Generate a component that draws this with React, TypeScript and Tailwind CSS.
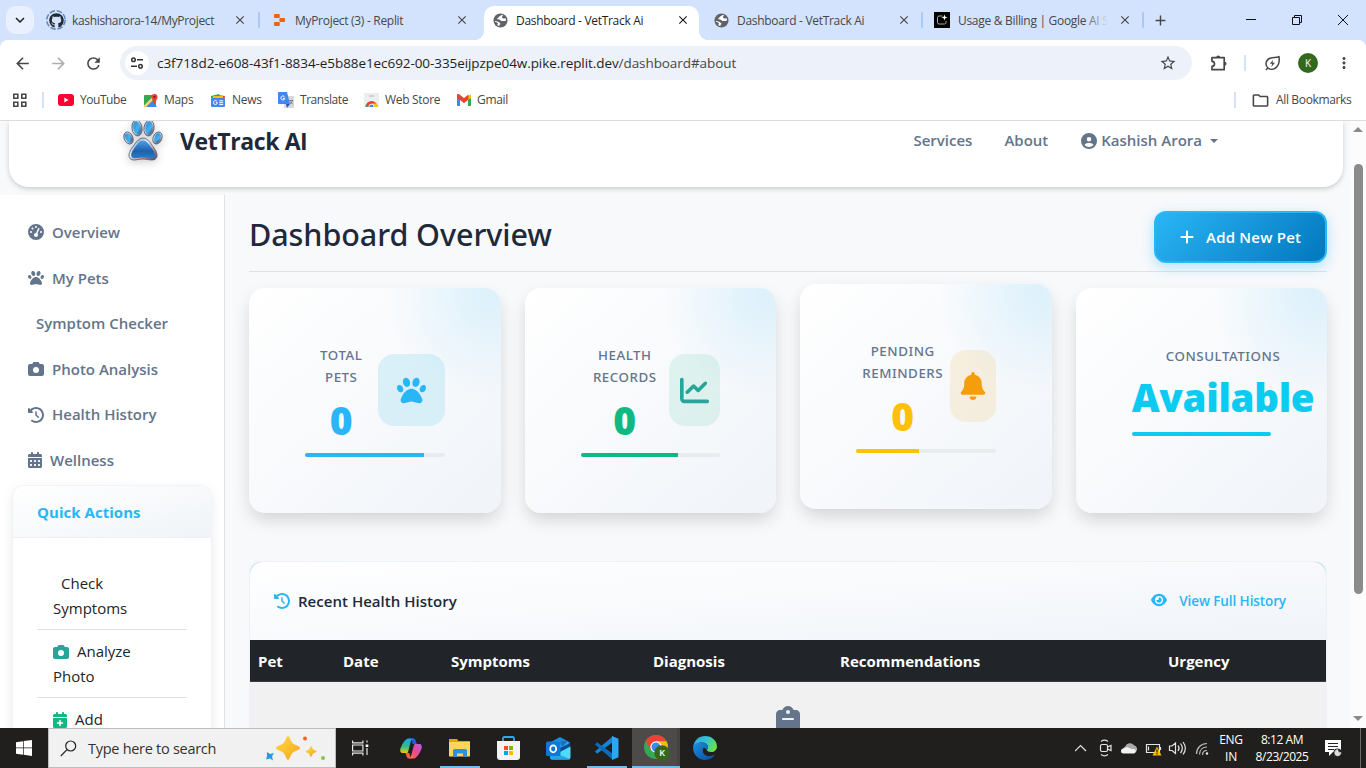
import React from "react";
import {
  FaGithub, FaPaw, FaGaugeHigh, FaCamera, FaClockRotateLeft, FaCalendarDays, FaCalendarPlus,
  FaCircleUser, FaChartLine, FaBell, FaEye, FaPlus, FaClipboard,
} from "react-icons/fa6";
import {
  MdArrowBack, MdArrowForward, MdRefresh, MdStarBorder, MdMoreVert,
  MdClose, MdAdd, MdOutlineFolder, MdKeyboardArrowDown,
} from "react-icons/md";

function Sep({ className = "" }: { className?: string }) {
  return <div className={`h-4 w-0.5 shrink-0 rounded bg-[#a8c7fa] ${className}`} />;
}

function Tab({ icon, title, active, sep, fade, first }: {
  icon: React.ReactNode; title: string; active?: boolean; sep?: boolean; fade?: boolean; first?: boolean;
}) {
  return (
    <div className="relative flex h-10 w-[221px] shrink-0 items-center">
      {active && (
        <>
          <div className="absolute top-[6px] bottom-0 left-[2px] w-[215px] rounded-t-[10px] bg-white" />
          <div className="absolute bottom-0 -left-[8px] size-[10px] bg-[radial-gradient(circle_at_0_0,transparent_10px,#fff_10.5px)]" />
          <div className="absolute bottom-0 left-[217px] size-[10px] bg-[radial-gradient(circle_at_100%_0,transparent_10px,#fff_10.5px)]" />
        </>
      )}
      <div className="relative ml-[7px] flex w-[24px] justify-center">{icon}</div>
      <div className={`relative overflow-hidden pt-[2px] ${first ? "ml-[1px] w-[151px]" : "ml-[3px] w-[150px]"}`}>
        <span className={`block whitespace-nowrap text-[12px] leading-4 ${first ? "tracking-[-0.33px]" : "tracking-[-0.3px]"} ${active ? "text-[#1f1f1f]" : "text-[#474747]"}`}>{title}</span>
        {fade && <div className="absolute inset-y-0 right-0 w-6 bg-linear-to-r from-transparent to-[#d3e3fd]" />}
      </div>
      <MdClose className={`relative ml-[10px] size-[14px] shrink-0 ${active ? "text-[#1f1f1f]" : "text-[#474747]"}`} />
      {sep && <Sep className="ml-auto mr-px" />}
    </div>
  );
}

function ReplitIcon() {
  return (
    <svg className="relative -left-px" width="11" height="12" viewBox="0 0 11 12" fill="#f26207">
      <rect x="0" y="0" width="5.800" height="4" rx="1" />
      <rect x="5.400" y="4" width="5.600" height="4" rx="1" />
      <rect x="0" y="8" width="5.800" height="4" rx="1" />
    </svg>
  );
}

function AiStudioIcon() {
  return (
    <svg className="relative -left-px" width="16" height="16" viewBox="0 0 16 16">
      <rect width="16" height="16" fill="#000" />
      <path d="M8.500 4H5a1.500 1.500 0 0 0-1.500 1.500v5A1.500 1.500 0 0 0 5 12h5.500a1.500 1.500 0 0 0 1.500-1.500V9" fill="none" stroke="#aaa" />
      <path d="M10.500 2.500l.8 2.200 2.200.8-2.200.8-.8 2.200-.8-2.200-2.200-.8 2.200-.8z" fill="#fff" />
    </svg>
  );
}

function GlobeIcon() {
  return (
    <svg className="relative -left-px" width="15" height="15" viewBox="0 0 16 16">
      <circle cx="8" cy="8" r="7.500" fill="#5f6368" />
      <path d="M8.600 2c-.2 1.300-2 .9-2.100 2-.1 1-1.900.8-1.900 1.900 0 1.200 1.300 1.100 2.500 1.200 1.200.2 1 1.400 2.300 1.500 1.500.1 3 .2 4.500-.7.100-1-.2-2-.6-2.700-.7.700-1.800.8-2.600.3-.8-.6-1.300-.4-1.200-1.300.1-.8 1.300-.5 1.400-1.700C10.200 2.200 9.500 2 8.600 2z" fill="#fff" />
      <path d="M2 8.400c1.200 0 2.700.3 3.900 1.100 1 .8 2 .8 1.900 1.900-.1.900-1.200 1-1.100 2.500-.8-.2-1.600-.6-2.200-1.200.2-.7 1-1 .6-1.700-.4-.8-1.900-1.200-2.900-1.300-.1-.4-.2-.9-.2-1.300z" fill="#fff" />
    </svg>
  );
}

function BrowserTop() {
  return (
    <header className="shrink-0">
      <div className="flex h-10 items-center bg-[#d3e3fd]">
        <div className="ml-[6px] mr-[6px] flex size-7 items-center justify-center rounded-[10px] bg-[#e9f0fe]">
          <MdKeyboardArrowDown className="size-[18px] text-[#1f1f1f]" />
        </div>
        <Tab first sep title="kashisharora-14/MyProject" icon={
          <div className="relative -left-[3px] flex size-5 shrink-0 items-center justify-center">
            <svg className="absolute inset-0" width="20" height="20" viewBox="0 0 20 20" fill="none" stroke="#5f83b8" strokeWidth="1.500" strokeDasharray="5.500 1.800"><circle cx="10" cy="10" r="9.200" /></svg>
            <FaGithub className="size-[15px] text-[#24292f]" />
          </div>
        } />
        <Tab title="MyProject (3) - Replit" icon={<ReplitIcon />} />
        <Tab active title="Dashboard - VetTrack Ai" icon={<GlobeIcon />} />
        <Tab sep title="Dashboard - VetTrack Ai" icon={<GlobeIcon />} />
        <Tab sep fade title="Usage & Billing | Google AI S" icon={<AiStudioIcon />} />
        <MdAdd className="ml-[7px] size-[17px] text-[#474747]" />
        <svg className="ml-auto mr-[17px]" width="104" height="12" viewBox="0 0 104 12" fill="none" stroke="#111">
          <path d="M1 5.500h10M47.500 3.500h7v7h-7zM49.500 3.500v-2h7v7h-2M93 1l10 10M103 1l-10 10" />
        </svg>
      </div>
      <div className="bg-[#d3e3fd]">
        <div className="rounded-t-[8px] bg-white">
          <div className="flex h-[46px] items-center">
            <MdArrowBack className="ml-[13px] size-[19px] text-[#474747]" />
            <MdArrowForward className="ml-[17px] size-[19px] text-[#adadad]" />
            <MdRefresh className="ml-4 size-[19px] text-[#474747]" />
            <div className="ml-[17px] flex h-[34px] w-[1072px] items-center rounded-full bg-[#ecf1fa] px-[5px]">
              <div className="flex size-6 items-center justify-center rounded-full bg-white">
                <svg width="14" height="12" viewBox="0 0 14 12" fill="none" stroke="#333" strokeWidth="1.500">
                  <circle cx="3.500" cy="2.700" r="1.800" /><path d="M7 2.700h6M1 9.200h6" /><circle cx="10.500" cy="9.200" r="1.800" />
                </svg>
              </div>
              <span className="ml-2 whitespace-nowrap text-[13.5px] tracking-[-0.073px] text-[#1f1f1f]">
                c3f718d2-e608-43f1-8834-e5b88e1ec692-00-335eijpzpe04w.pike.replit.dev<span className="text-[#474747]">/dashboard#about</span>
              </span>
              <MdStarBorder className="ml-auto mr-[10px] size-[18px] text-[#474747]" />
            </div>
            <svg className="ml-[17px]" width="19" height="19" viewBox="0 0 19 19" fill="none" stroke="#474747" strokeWidth="1.700">
              <path d="M3 3.700h12.200v12H3v-3.400a2.500 2.500 0 0 0 0-5z" strokeLinejoin="round" />
              <path d="M7.200 3.500a2 2 0 0 1 4 0zM15.500 7.700a2 2 0 0 1 0 4z" fill="#474747" stroke="none" />
            </svg>
            <div className="ml-4 h-4 w-0.5 bg-[#d3e3fd]" />
            <svg className="ml-[18px]" width="17" height="17" viewBox="0 0 17 17" fill="none" stroke="#474747" strokeWidth="1.500">
              <path d="M2 15l2-2.300M4 13C.6 10 1.800 5 6 3.300 9 2.100 12 3 15 1.800c.6 4.200 0 8.200-2.700 10.600C9.800 14.700 6.300 15 4 13z" />
              <path d="M9 5L5.800 8.800h2.400L7.300 12l3.700-4.200H8.600z" fill="#474747" stroke="none" />
            </svg>
            <div className="ml-[17px] flex size-5 items-center justify-center rounded-full bg-[#33691e] text-[10px] text-white">K</div>
            <MdMoreVert className="ml-[17px] size-[18px] text-[#474747]" />
          </div>
          <div className="flex h-[35px] items-center border-b border-[#dcdcdc] pb-[6px] pl-3 text-[12px] tracking-[-0.3px] text-[#474747] [&>span]:whitespace-nowrap">
            <svg width="15" height="15" viewBox="0 0 15 15" fill="none" stroke="#474747" strokeWidth="1.600">
              <path d="M1.800 1.300h4v4h-4zM9.800 1.300h4v4h-4zM1.800 9.300h4v4h-4zM9.800 9.300h4v4h-4z" />
            </svg>
            <div className="ml-[15px] h-4 w-0.5 bg-[#d3e3fd]" />
            <svg className="ml-[14px]" width="16" height="12" viewBox="0 0 16 12"><rect width="16" height="12" rx="3" fill="#f03" /><path d="M6.300 3.500v5l4.200-2.500z" fill="#fff" /></svg>
            <span className="ml-[6px] w-[47px] tracking-[-0.45px]">YouTube</span>
            <svg className="ml-4" width="16" height="15" viewBox="0 0 16 15">
              <rect x="1" y="2" width="12" height="12" rx="1" fill="#34a853" /><path d="M1 14L8 7l6 7z" fill="#4285f4" /><path d="M1 12.500L11 2.500l2 1.500L3 14H1z" fill="#fdd663" />
              <path d="M11.500 11C11 8 8.500 7 8.500 4a3 3 0 0 1 6 0c0 3-2.500 4-3 7z" fill="#ea4335" /><circle cx="11.500" cy="3.800" r="1.100" fill="#811" />
            </svg>
            <span className="ml-[5px] w-[30px]">Maps</span>
            <svg className="ml-[16px]" width="16" height="15" viewBox="0 0 16 15">
              <path d="M1 3l8-2 1 4H1z" fill="#34a853" /><path d="M8 2l7 1-1 6-6-1z" fill="#ea4335" /><path d="M3 3h10v3H3z" fill="#fbbc04" /><rect x="1" y="5" width="14" height="9" rx="1" fill="#4285f4" />
              <path d="M7 8.300a2 2 0 1 0 .4 1.400H5.700M9.200 7.800h4M9.200 9.700h4M9.200 11.600h4" stroke="#fff" fill="none" />
            </svg>
            <span className="ml-[6px] w-[30px]">News</span>
            <svg className="ml-[16px]" width="16" height="16" viewBox="0 0 16 16">
              <rect x="6" y="4" width="10" height="12" rx="1" fill="#d5d9dd" /><path d="M1 0h8l3 12H1a1 1 0 0 1-1-1V1a1 1 0 0 1 1-1z" fill="#4285f4" /><path d="M8 12h4l-3 4z" fill="#2a56c6" />
              <path d="M6.500 4.700a2 2 0 1 0 .4 1.600H5" stroke="#fff" fill="none" /><path d="M11.200 8.500H15M14.300 8.500c-.5 2-1.500 2.800-2.500 3.500M12 9.500l2.600 2.700" stroke="#5f6368" strokeWidth=".8" fill="none" />
            </svg>
            <span className="ml-[6px] w-[48px] tracking-[-0.45px]">Translate</span>
            <svg className="ml-4" width="15" height="14" viewBox="0 0 15 14">
              <path d="M0 0h15v13a1 1 0 0 1-1 1H1a1 1 0 0 1-1-1z" fill="#eceff1" /><path d="M1.500 14a6 6 0 0 1 12 0z" fill="#ea4335" /><path d="M1.500 14a6 6 0 0 1 .8-3l3 3z" fill="#34a853" /><path d="M8 10.500h5a6 6 0 0 1 .5 3.500H8z" fill="#fbbc04" /><circle cx="7.500" cy="13.500" r="2.800" fill="#fff" /><circle cx="7.500" cy="13.500" r="2.100" fill="#4285f4" /><path d="M5 3h5" stroke="#b0b5b9" />
            </svg>
            <span className="ml-[6px] w-[56px]">Web Store</span>
            <svg className="ml-[15px]" width="16" height="12" viewBox="0 0 16 12">
              <path d="M1 2v9a1 1 0 0 0 1 1h2V4z" fill="#4285f4" /><path d="M15 2v9a1 1 0 0 1-1 1h-2V4z" fill="#34a853" /><path d="M12 2l3-1.500V4l-3 2.300z" fill="#fbbc04" /><path d="M1 4V1.500C1 .2 2.500-.3 3.500.5L8 4l4.500-3.400V5.700L8 9z" fill="#ea4335" />
            </svg>
            <span className="ml-[5px]">Gmail</span>
            <div className="ml-auto h-4 w-0.5 bg-[#d3e3fd]" />
            <MdOutlineFolder className="ml-[15px] size-[19px]" />
            <span className="ml-[6px] mr-[14px] w-[76px] tracking-[-0.35px]">All Bookmarks</span>
          </div>
        </div>
      </div>
    </header>
  );
}

function PawLogo() {
  return (
    <svg className="drop-shadow-[0_2px_4px_rgba(0,0,0,0.2)]" width="44" height="44" viewBox="0 0 44 44" stroke="#4c5876" strokeWidth=".8">
      <defs>
        <linearGradient id="rim" x1="0" y1="0" x2="1" y2="1"><stop offset="0" stopColor="#5d7ba6" /><stop offset=".4" stopColor="#e6edf5" /><stop offset=".7" stopColor="#b98f88" /><stop offset="1" stopColor="#3a4a70" /></linearGradient>
        <linearGradient id="pad" x1="0" y1="0" x2="0" y2="1"><stop offset="0" stopColor="#4aa3e6" /><stop offset=".6" stopColor="#1f5fae" /><stop offset="1" stopColor="#2a7cc9" /></linearGradient>
        <linearGradient id="toe" x1="0" y1="0" x2="1" y2="1"><stop offset="0" stopColor="#2f86d6" /><stop offset=".6" stopColor="#42b4ee" /><stop offset="1" stopColor="#284a86" /></linearGradient>
      </defs>
      <g fill="url(#rim)">
        <ellipse cx="16" cy="10" rx="5" ry="8" transform="rotate(-8 16 10)" />
        <ellipse cx="28" cy="10" rx="5" ry="8" transform="rotate(8 28 10)" />
        <ellipse cx="7.500" cy="20" rx="4.300" ry="6.300" transform="rotate(-24 7.500 20)" />
        <ellipse cx="36.500" cy="20" rx="4.300" ry="6.300" transform="rotate(24 36.500 20)" />
        <path d="M22 20c5 0 8 6 11 10 3 4 4 8 2 10.500-3 3-8 .5-13 .5s-10 2.500-13-.5C7 38 8 34 11 30c3-4 6-10 11-10z" />
      </g>
      <g fill="url(#toe)" stroke="none">
        <ellipse cx="16" cy="10" rx="3.700" ry="6.700" transform="rotate(-8 16 10)" />
        <ellipse cx="28" cy="10" rx="3.700" ry="6.700" transform="rotate(8 28 10)" />
        <ellipse cx="7.500" cy="20" rx="2.900" ry="4.900" transform="rotate(-24 7.500 20)" />
        <ellipse cx="36.500" cy="20" rx="2.900" ry="4.900" transform="rotate(24 36.500 20)" />
      </g>
      <path d="M22 22.500c4 0 6.700 5 9.500 8.700 2.300 3 3 6.300 1.700 8-2 2-7 .3-11.200.3s-9.200 1.700-11.200-.3c-1.300-1.700-.6-5 1.700-8 2.800-3.700 5.500-8.700 9.500-8.700z" fill="url(#pad)" stroke="none" />
    </svg>
  );
}

const navItems = [
  { label: "Overview", icon: <FaGaugeHigh className="size-4" /> },
  { label: "My Pets", icon: <FaPaw className="size-4" /> },
  { label: "Symptom Checker", icon: null },
  { label: "Photo Analysis", icon: <FaCamera className="size-4" /> },
  { label: "Health History", icon: <FaClockRotateLeft className="size-4" /> },
  { label: "Wellness", icon: <FaCalendarDays className="h-4 w-[14px]" /> },
];

function Sidebar() {
  return (
    <aside className="flex w-[225px] shrink-0 flex-col border-r border-[#dee2e6] bg-white pt-[14.5px]">
      {navItems.map((n) => (
        <div key={n.label} className="flex h-[45.600px] shrink-0 items-center whitespace-nowrap pl-7 text-[15px] font-semibold text-[#64748b]">
          {n.icon}<span className="ml-2">{n.label}</span>
        </div>
      ))}
      <div className="ml-3 mt-[1.5px] w-[200px] shrink-0 rounded-[12px] border border-[#f1f4f7] bg-white shadow-[0_4px_12px_rgba(0,0,0,0.08)]">
        <div className="flex h-[52px] items-center rounded-t-[12px] border-b border-[#edf0f4] bg-linear-to-br from-white to-[#f0f4f8] pl-6 pt-[2px] text-[15px] font-bold tracking-[0.04px] text-[#29b6f6]">Quick Actions</div>
        <div className="px-6 pt-6 text-[15px] leading-[25.600px] text-[#212529]">
          <div className="border-b border-[#dee2e6] px-4 pb-[7px] pt-[9px]"><span className="ml-2">Check</span><br />Symptoms</div>
          <div className="border-b border-[#dee2e6] px-4 pb-[7px] pt-[9px]"><div className="flex items-center"><FaCamera className="mr-2 size-4 text-[#26a69a]" />Analyze</div>Photo</div>
          <div className="px-4 pb-[7px] pt-[9px]"><div className="flex items-center"><FaCalendarPlus className="mr-2 h-4 w-[14px] text-[#10b981]" />Add</div></div>
        </div>
      </div>
    </aside>
  );
}

function StatCard({ title, value, text, bar, fill, raised, box, icon }: {
  title: string[]; value: string; text: string; bar: string; fill: string; raised?: boolean; box?: string; icon?: React.ReactNode;
}) {
  return (
    <div className={`relative h-[225px] min-w-0 rounded-[16px] bg-linear-to-br from-white to-[#f0f4f9] p-14 shadow-[0_8px_18px_-2px_rgba(0,0,0,0.16)] ${raised ? "-translate-y-1" : ""}`}>
      <div className="absolute right-0 top-0 size-[125px] rounded-tr-[16px] bg-[radial-gradient(circle_120px_at_90%_5%,rgba(41,182,246,0.13),rgba(41,182,246,0.100)_20%,transparent_85%)]" />
      <div className="relative flex h-[92px] items-center">
        <div className={`flex h-full min-w-0 flex-1 flex-col items-center ${icon ? "" : "w-[183px] flex-none pt-px"}`}>
          {title.map((t) => (
            <div key={t} className="h-[22px] whitespace-nowrap font-['Noto_Sans','Open_Sans',sans-serif] text-[13.3px] font-medium leading-[23px] tracking-[0.55px] text-[#64748b]">{t}</div>
          ))}
          <div className={`whitespace-nowrap font-['Noto_Sans','Open_Sans',sans-serif] font-black ${icon ? "text-[39px] leading-[64px]" : "text-[38.5px] leading-[60px] tracking-[-0.3px]"} ${text}`}>{value}</div>
        </div>
        {icon && <div className={`flex h-[72px] shrink-0 items-center justify-center rounded-[16px] ${box}`}>{icon}</div>}
      </div>
      <div className={`relative h-1 overflow-hidden rounded-full ${icon ? "mt-[17px] bg-[#e9ecef]" : "-mt-1"}`}>
        <div className={`h-full ${bar} ${fill}`} />
      </div>
    </div>
  );
}

function Page() {
  return (
    <div className="flex min-h-0 flex-1 bg-[#f8f9fb]">
      <div className="flex min-w-0 flex-1 flex-col overflow-hidden">
        <nav className="ml-[9px] mr-[7px] flex h-[66px] shrink-0 rounded-b-[20px] bg-white pl-[112px] pr-[125px] shadow-[0_2px_5px_rgba(0,0,0,0.18)]">
          <div className="-mt-[3px] h-11 w-11"><PawLogo /></div>
          <span className="ml-[15px] mt-[2px] whitespace-nowrap text-[23px] font-bold leading-[36px] tracking-[-0.4px] text-[#1e293b]">VetTrack AI</span>
          <div className="ml-auto flex h-[39px] items-center whitespace-nowrap text-[15px] font-semibold text-[#64748b]">
            <span className="mr-8">Services</span>
            <span className="mr-[33px]">About</span>
            <FaCircleUser className="mr-1 size-4" />
            <span>Kashish Arora</span>
            <div className="ml-[8px] h-0 w-0 border-x-[4px] border-t-[4px] border-x-transparent border-t-[#64748b]" />
          </div>
        </nav>
        <div className="mt-2 flex min-h-0 flex-1 overflow-hidden">
          <Sidebar />
          <main className="ml-6 mr-[23px] min-w-0 flex-1">
            <div className="flex h-[77px] justify-between border-b border-[#dee2e6] pt-4">
              <h1 className="whitespace-nowrap font-['Noto_Sans','Open_Sans',sans-serif] text-[30.5px] font-medium leading-[47px] tracking-[-0.07px] text-[#1e293b]">Dashboard Overview</h1>
              <div className="flex h-[52px] w-[173px] items-center rounded-[12px] border-2 border-[#29b6f6] bg-linear-135 from-[#29b6f6] to-[#0277bd] pl-[23px] text-[15px] font-semibold text-white shadow-[0_4px_14px_rgba(41,182,246,0.35)]">
                <FaPlus className="mr-[11px] size-4" /><span className="whitespace-nowrap tracking-[0.22px]">Add New Pet</span>
              </div>
            </div>
            <div className="mt-4 grid grid-cols-4 gap-6">
              <StatCard title={["TOTAL", "PETS"]} value="0" text="text-[#29b6f6]" bar="bg-[#29b6f6]" fill="w-[85%]" box="w-[67px] bg-[#26b6e4]/14" icon={<FaPaw className="size-[29px] text-[#29b6f6]" />} />
              <StatCard title={["HEALTH", "RECORDS"]} value="0" text="text-[#10b981]" bar="bg-[#10b981]" fill="w-[70%]" box="w-[51px] bg-[#10b981]/11" icon={<FaChartLine className="size-[29px] text-[#26a69a]" />} />
              <StatCard raised title={["PENDING", "REMINDERS"]} value="0" text="text-[#ffc107]" bar="bg-[#ffc107]" fill="w-[45%]" box="w-[46px] bg-[#f0a80b]/12" icon={<FaBell className="size-[28px] text-[#f59e0b]" />} />
              <StatCard title={["CONSULTATIONS"]} value="Available" text="text-[#0dcaf0]" bar="bg-[#0dcaf0]" fill="w-full" />
            </div>
            <section className="mt-12 overflow-hidden rounded-t-[12px] border border-[#eef1f5] bg-[#f1f1f1]">
              <div className="bg-[#b5e0f8]">
                <div className="flex h-[78px] items-center rounded-t-[13px] bg-linear-to-br from-white to-[#f0f4f9] pl-6 pr-10">
                  <FaClockRotateLeft className="size-4 text-[#29b6f6]" />
                  <span className="ml-2 whitespace-nowrap pt-px text-[15px] font-semibold tracking-[0.03px] text-[#1e293b]">Recent Health History</span>
                  <FaEye className="ml-auto size-4 -translate-y-px text-[#29b6f6]" />
                  <span className="ml-3 whitespace-nowrap pt-px text-[13.5px] font-semibold tracking-[-0.1px] text-[#29b6f6]">View Full History</span>
                </div>
              </div>
              <div className="grid h-[42px] grid-cols-[85px_108px_202px_187px_328px_1fr] items-center border-b border-[#373b3e] bg-[#212529] pl-2 pt-px text-[15px] font-bold text-white">
                <span>Pet</span><span>Date</span><span>Symptoms</span><span>Diagnosis</span><span>Recommendations</span><span>Urgency</span>
              </div>
              <div className="flex h-[200px] justify-center pt-6"><FaClipboard className="h-8 w-6 text-[#64748b]" /></div>
            </section>
          </main>
        </div>
      </div>
      <div className="flex w-4 shrink-0 flex-col items-center bg-[#fcfcfc] pb-[7px] pt-[6px]">
        <div className="h-0 w-0 border-x-[5px] border-b-[5px] border-x-transparent border-b-[#8b8b8b]" />
        <div className="mt-8 h-[430px] w-[9px] rounded-full bg-[#8b8b8b]" />
        <div className="mt-auto h-0 w-0 border-x-[5px] border-t-[5px] border-x-transparent border-t-[#8b8b8b]" />
      </div>
    </div>
  );
}

function TaskSlot({ children, className = "", line }: { children: React.ReactNode; className?: string; line?: string }) {
  return (
    <div className={`relative flex h-10 w-[49px] shrink-0 items-center justify-center ${className}`}>
      {children}
      {line && <div className={`absolute bottom-0 h-0.5 bg-[#76b9ed] ${line}`} />}
    </div>
  );
}

function Taskbar() {
  return (
    <footer className="flex h-10 shrink-0 items-center bg-[#201f1e]">
      <div className="flex w-12 justify-center">
        <svg width="16" height="16" viewBox="0 0 16 16" fill="#fff"><path d="M0 2.200L7 1.200v6.400H0zM7.700 1.100L16 0v7.600H7.700zM0 8.300h7v6.400l-7-1zM7.700 8.300H16V16l-8.300-1.200z" /></svg>
      </div>
      <div className="flex h-10 w-[288px] items-center border border-[#bcbcbc] bg-[#f1f1f1] pl-[11px]">
        <svg width="17" height="17" viewBox="0 0 17 17" fill="none" stroke="#222" strokeWidth="1.200"><circle cx="10.700" cy="6" r="5" /><path d="M7 9.700L.8 16" /></svg>
        <span className="ml-[11px] whitespace-nowrap pt-px text-[14.500px] tracking-[-0.28px] text-[#333]">Type here to search</span>
        <svg className="ml-auto mr-[9px]" width="62" height="26" viewBox="0 0 62 26">
          <defs><linearGradient id="gold" x1="0" y1="0" x2="1" y2="1"><stop offset="0" stopColor="#ffdc4a" /><stop offset="1" stopColor="#f5a417" /></linearGradient></defs>
          <path d="M24 1c1.600 0 2.500 5.500 5 7.500s7 2.600 7 4.500-4.500 2.500-7 4.500-3.400 7.500-5 7.500-2.500-5.500-5-7.500-7-2.600-7-4.500 4.500-2.500 7-4.500S22.400 1 24 1z" fill="url(#gold)" />
          <path d="M47 11c.8 0 1.200 2.500 2.200 3.500s3.300 1.200 3.300 2-2.300 1-3.300 2S47.800 22 47 22s-1.200-2.500-2.200-3.500-3.300-1.200-3.300-2 2.300-1 3.300-2S46.200 11 47 11z" fill="url(#gold)" />
          <path d="M3 17l3 2 4-1-2 3.500 1 4-3-2-4 1 1-3.500z" fill="#1a9ff0" />
          <circle cx="41" cy="3.500" r="2" fill="#f26522" /><circle cx="59" cy="23" r="2" fill="#8bc34a" />
        </svg>
      </div>
      <TaskSlot>
        <svg width="17" height="16" viewBox="0 0 17 16" fill="none" stroke="#e8e8e8" strokeWidth="1.200"><path d="M.6.500v2.400h10.300V.500M.6 15.500v-2.400h10.300v2.400M.6 5h10.300v6H.6zM15 .5v2M15 8v7" /><path d="M13.700 4.500h2.600V7h-2.600z" fill="#fff" stroke="none" /></svg>
      </TaskSlot>
      <TaskSlot className="pl-[3px]">
        <svg width="22" height="21" viewBox="0 0 24 22">
          <defs>
            <linearGradient id="cp1" x1="0" y1="0" x2="0" y2="1"><stop offset="0" stopColor="#1aa7ee" /><stop offset=".55" stopColor="#2dbd86" /><stop offset="1" stopColor="#f2c811" /></linearGradient>
            <linearGradient id="cp2" x1="0" y1="1" x2="1" y2="0"><stop offset="0" stopColor="#ff7a3d" /><stop offset=".5" stopColor="#e84a8a" /><stop offset="1" stopColor="#b65cf0" /></linearGradient>
          </defs>
          <path d="M13 0h2c1.500 0 2 1.500 2.500 3.500L18.500 6h-5z" fill="#2260d8" />
          <path d="M7 1C8 0 9 0 10 0h5c-2 0-3 2-4 6l-2 8c-.5 2-1 2-2 2H3c-3 0-3-3-2.500-5C2 7 4 3 7 1z" fill="url(#cp1)" />
          <path d="M6 16h4l1.500 4.500L12 22h-2c-2 0-2.500-1-3-3z" fill="#ff5f3d" />
          <path d="M17 21c-1 1-2 1-3 1H9c2 0 3-2 4-6l2-8c.5-2 1-2 2-2h4c3 0 3 3 2.500 5-1.500 4-3.500 8-6.500 10z" fill="url(#cp2)" />
        </svg>
      </TaskSlot>
      <TaskSlot className="pl-[2px]" line="left-[6px] w-10">
        <svg width="23" height="20" viewBox="0 0 23 20"><path d="M1 1h8l1.500 2H22v15H1z" fill="#e8a10c" /><path d="M1 4h21v14.500H1z" fill="#ffd55f" /><path d="M5 12.500A1.500 1.500 0 0 1 6.500 11h11a1.500 1.500 0 0 1 1.500 1.500V19h-4v-3.500H9V19H5z" fill="#2f8fe0" /></svg>
      </TaskSlot>
      <TaskSlot className="pl-[2px]">
        <svg width="23" height="24" viewBox="0 0 23 24"><path d="M6 6V2.500C6 1.500 6.500 1 7.500 1h8c1 0 1.500.5 1.500 1.500V6" fill="none" stroke="#29a9ee" strokeWidth="1.800" /><path d="M0 5h23v16a3 3 0 0 1-3 3H3a3 3 0 0 1-3-3z" fill="#f3f3f3" /><path d="M7 10h4v4H7z" fill="#f25022" /><path d="M12 10h4v4h-4z" fill="#7fba00" /><path d="M7 15h4v4H7z" fill="#00a4ef" /><path d="M12 15h4v4h-4z" fill="#ffb900" /></svg>
      </TaskSlot>
      <TaskSlot className="pl-[3px]">
        <svg width="25" height="23" viewBox="0 0 25 23"><path d="M4 5.500L13 .500q1-.5 2 0l9 5V14H4z" fill="#1490df" /><path d="M13 4h9v7h-9z" fill="#32a9ee" /><path d="M14 4h8l-6 6z" fill="#1a6fc0" /><path d="M24 6v6l-11 5-3-4z" fill="#0c4d92" /><path d="M4 14l10 1 10.500-5.500V20a2.500 2.500 0 0 1-2.500 2.500H7A2.500 2.500 0 0 1 4 20z" fill="#4fdcf8" /><path d="M4 14l20 8q-1 .5-2 .5H7A2.500 2.500 0 0 1 4 20z" fill="#22a5ea" /><rect x="0" y="4.500" width="14.500" height="14.500" rx="1.500" fill="#0f78d4" /><ellipse cx="7.200" cy="11.800" rx="3" ry="3.500" fill="none" stroke="#fff" strokeWidth="1.700" /></svg>
      </TaskSlot>
      <TaskSlot className="pl-[3px]" line="left-[6px] w-10">
        <svg width="24" height="24" viewBox="0 0 24 24"><path d="M18 0L0 15.500l2 2.200L18 6z" fill="#1684d1" /><path d="M18 24L0 8.500l2-2.200L18 18z" fill="#0a6dbb" /><path d="M17 0l6.500 2.800v18.400L17 24z" fill="#29a8f3" /></svg>
      </TaskSlot>
      <div className="relative ml-[2px] flex h-10 w-12 shrink-0 items-center justify-center border-r-[3px] border-[#454443] bg-[#4c4b4a] pl-[5px]">
        <svg width="26" height="26" viewBox="0 0 26 26">
          <circle cx="12" cy="12" r="12" fill="#34a853" /><path d="M1.600 6A12 12 0 0 1 22.400 6H12L7 9z" fill="#ea4335" /><path d="M12 6.300h10.500A12 12 0 0 1 12 24l5-9z" fill="#fbbc04" /><path d="M1.600 6L7 15l4-8z" fill="#ea4335" />
          <circle cx="12" cy="12" r="5.700" fill="#fff" /><circle cx="12" cy="12" r="4.500" fill="#4285f4" />
          <circle cx="18" cy="18" r="7.700" fill="#33691e" />
          <text x="18" y="21.300" textAnchor="middle" fontSize="9" fill="#fff" fontFamily="Open Sans, sans-serif" fontWeight="600">K</text>
        </svg>
        <div className="absolute bottom-0 left-0 h-0.5 w-12 bg-[#76b9ed]" />
      </div>
      <TaskSlot>
        <svg width="24" height="24" viewBox="0 0 24 24">
          <defs>
            <linearGradient id="ed1" x1="0" y1="0" x2="1" y2=".4"><stop offset="0" stopColor="#2ba6e8" /><stop offset=".6" stopColor="#35c6d0" /><stop offset="1" stopColor="#66e04a" /></linearGradient>
            <linearGradient id="ed2" x1="0" y1="0" x2="1" y2="1"><stop offset="0" stopColor="#1b8fdd" /><stop offset="1" stopColor="#0c4a9c" /></linearGradient>
          </defs>
          <path d="M.3 10.500C1.500 4 6 0 12 0c7 0 12 5 12 10.500 0 3.500-2.700 5.500-5.500 5.500-3 0-4.500-1-4.500-2s1-1.500 1-3c0-2.500-2.500-4.500-6-4.500-4 0-7 2-8.700 4z" fill="url(#ed1)" />
          <path d="M.2 10C2 7.500 5 6.300 8.500 6.500c3.500 0 6.500 2 6.500 4.500 0 1.500-1 2-1 3l-3-2.500c-2.500 2-1.500 9.500 6.500 8.500 2-.2 3.500-1 4.600-1.700C20 22 16 24 12 24 5 24-.8 18 .2 10z" fill="url(#ed2)" />
        </svg>
      </TaskSlot>
      <div className="ml-auto flex items-center">
        <svg width="134" height="20" viewBox="0 0 134 20" fill="none" stroke="#e4e4e4" strokeWidth="1.200">
          <path d="M0 13l5.500-5.500L11 13" />
          <rect x="25.500" y="6.500" width="7" height="7" rx="1.500" /><path d="M32.500 9L36 7.500v5L32.500 11M26 3.500c2-1.500 5-1.500 7 0M26 16.500c2 1.500 5 1.500 7 0" />
          <g transform="translate(46 0)">
            <path d="M4 15a3.500 3.500 0 0 1 .2-6.500A5 5 0 0 1 13 7.300 4 4 0 0 1 15 14z" fill="#aaa" stroke="none" /><path d="M2.500 15.500a2.500 2.500 0 0 1 0-5c1-.5 3-2 5-1s3 1.500 5.500 1.500a2.300 2.300 0 0 1 0 4.500z" fill="#f2f2f2" stroke="none" />
            <path d="M25.500 6.500h13v8h-13zM39.500 9v3M27.500 8.500v4" /><path d="M31.500 17.500L36 8.500l4.500 9z" fill="#fbbc04" stroke="none" /><path d="M36 11.500v3M36 15.300v1.200" stroke="#222" />
            <path d="M48.500 8v4.500H51l3.500 3V5L51 8zM57 7.500c1.200 1.700 1.200 4 0 5.500M59.500 5.500c2.300 3 2.300 6.700 0 9.700M62 4c3 4 3 8.700 0 12.500" />
            <path d="M75.500 16c0-6 4.500-10.500 10.500-10.500M78.500 16.500c0-4.500 3-7.500 7.500-7.500M81.500 17c0-3 1.800-4.500 4.500-4.500" stroke="#bbb" /><circle cx="86" cy="15.500" r="1.200" fill="#eee" stroke="none" />
          </g>
        </svg>
        <div className="ml-[4px] w-9 text-center text-[12px] leading-[17px] tracking-[-0.3px] text-white"><div>ENG</div><div>IN</div></div>
        <div className="ml-[5px] w-14 whitespace-nowrap text-center text-[12px] leading-[17px] tracking-[-0.45px] text-white"><div>8:12 AM</div><div>8/23/2025</div></div>
        <svg className="ml-[15px]" width="17" height="17" viewBox="0 0 17 17"><path d="M0 0h16v12H8l-4 4v-4H0z" fill="#fff" /><path d="M3 3.500h10M3 6.500h10M3 9.500h6" stroke="#222" /><circle cx="12.500" cy="12.500" r="4" fill="#222" /><path d="M10.500 15a3.300 3.300 0 0 0 5.500-2.500c-1.500.5-3.500-.5-3.200-3a3.300 3.300 0 0 0-2.300 5.500zM10 15.500l4-4" fill="#ddd" stroke="#ddd" strokeWidth=".6" /></svg>
        <div className="ml-[18px] mr-[5px] h-10 w-px bg-[#6a6a6a]" />
      </div>
    </footer>
  );
}

export default function App() {
  return (
    <div className="flex h-[768px] w-[1366px] flex-col overflow-hidden bg-white font-['Open_Sans','Noto_Sans',sans-serif]">
      <BrowserTop />
      <Page />
      <Taskbar />
    </div>
  );
}
